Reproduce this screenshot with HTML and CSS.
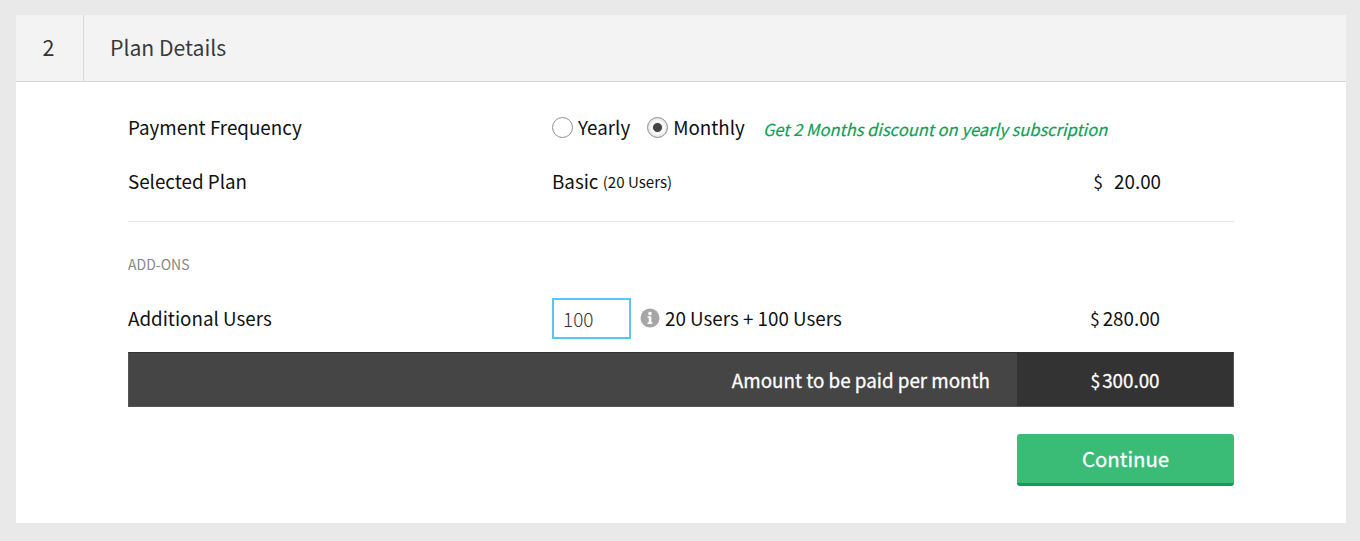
FILE: index.html
```
<!DOCTYPE html>
<html lang="en">
<head>
<meta charset="utf-8">
<title>Plan Details</title>
<link rel="stylesheet" href="styles.css">
</head>
<body>
<section class="panel">
  <header class="head">
    <div class="step">2</div>
    <h2 class="title">Plan Details</h2>
  </header>
  <div class="content">
    <div class="row row-freq">
      <div class="label">Payment Frequency</div>
      <div class="mid">
        <span class="radio"></span><span class="opt opt-y">Yearly</span>
        <span class="radio radio-on"></span><span class="opt">Monthly</span>
        <em class="promo">Get 2 Months discount on yearly subscription</em>
      </div>
    </div>
    <div class="row row-plan">
      <div class="label">Selected Plan</div>
      <div class="mid">Basic&nbsp;<small class="small">(20 Users)</small></div>
      <div class="amount"><span class="cur cur-wide">$</span>20.00</div>
    </div>
    <hr class="rule">
    <div class="section">ADD-ONS</div>
    <div class="row row-add">
      <div class="label lift">Additional Users</div>
      <div class="mid">
        <div class="field">100</div>
        <svg class="info" width="20" height="20" viewBox="0 0 20 20"><circle cx="10" cy="10" r="9.5" fill="#a6a6a6"/><circle cx="10" cy="5.6" r="1.8" fill="#fff"/><path d="M7.6 8.3h3.7v6h1.1v1.7H7.6v-1.7h1.2V10H7.6z" fill="#fff"/></svg>
        <span class="lift">20 Users + 100 Users</span>
      </div>
      <div class="amount amount-add"><span class="cur cur-add">$</span>280.00</div>
    </div>
    <div class="total">
      <div class="total-label">Amount to be paid per month</div>
      <div class="total-value"><span class="cur">$</span>300.00</div>
    </div>
    <div class="actions"><button class="btn" type="button">Continue</button></div>
  </div>
</section>
</body>
</html>
```
FILE: styles.css
```
* { box-sizing: border-box; }
html, body { margin: 0; height: 100%; }
body {
  background: #e9e9e9;
  padding: 15px 14px 18px 16px;
  font-family: "Noto Sans CJK JP", "Noto Sans", sans-serif;
  color: #111;
  font-size: 18.8px;
  line-height: 28px;
  overflow: hidden;
}
.panel { background: #fff; height: 508px; }
.head {
  display: flex;
  height: 67px;
  background: #f3f3f3;
  border-bottom: 1px solid #d4d4d4;
}
.step {
  width: 68px;
  border-right: 1px solid #d8d8d8;
  text-align: center;
  line-height: 64px;
  font-size: 21.5px;
  color: #333;
  padding-right: 2px;
}
.title {
  margin: 0;
  padding-left: 26px;
  font-weight: 400;
  font-size: 21.2px;
  line-height: 64px;
  color: #3a3a3a;
}
.content { padding: 18px 112px 0; }
.row { display: flex; align-items: center; }
.row-freq { height: 54px; }
.row-plan { height: 54px; }
.row-add { height: 41px; margin-top: 23px; }
.label { width: 424px; flex: none; }
.lift { padding-bottom: 2px; }
.mid { display: flex; align-items: center; flex: 1; white-space: pre; }
.radio {
  width: 21px;
  height: 21px;
  border-radius: 50%;
  border: 1px solid #8f8f8f;
  background: #fff;
  margin-right: 5px;
  flex: none;
}
.radio-on {
  background: radial-gradient(circle, #444 0 4px, #eee 5px, #fff 6px, #ddd 10px);
}
.opt-y { margin-right: 17px; }
.promo {
  margin: 4px 0 0 18px;
  font-size: 16.5px;
  color: #0d9f57;
  font-style: italic;
  -webkit-text-stroke: 0.2px #0d9f57;
}
.small { font-size: 15.1px; }
.amount { width: 200px; flex: none; text-align: right; padding-right: 73px; }
.amount-add { padding-right: 74px; }
.cur { font-size: 17.5px; margin-right: 2px; }
.cur-wide { margin-right: 11px; }
.cur-add { margin-right: 3px; }
.rule { margin: 13px 0 0; border: 0; height: 1px; background: #e4e4e4; }
.section {
  margin-top: 31px;
  height: 22px;
  font-size: 14px;
  line-height: 22px;
  color: #888;
}
.field {
  width: 79px;
  height: 41px;
  border: 2px solid #5cc4f5;
  padding-left: 9px;
  line-height: 37px;
  font-size: 19px;
  font-weight: 300;
  color: #333;
}
.info { margin: 0 5px 1px 9px; flex: none; }
.total {
  display: flex;
  height: 55px;
  margin-top: 13px;
  background: #454545;
  border: 1px solid #555;
  border-top-color: #333;
  color: #fff;
  -webkit-text-stroke: 0.3px #fff;
}
.total-label {
  flex: 1;
  text-align: right;
  padding-right: 27px;
  line-height: 53px;
}
.total-value {
  width: 216px;
  background: #333;
  text-align: center;
  line-height: 53px;
}
.actions { display: flex; justify-content: flex-end; margin-top: 27px; }
.btn {
  width: 217px;
  height: 52px;
  border: 0;
  border-bottom: 3px solid #0d9f57;
  border-radius: 3px;
  background: #3abb76;
  color: #fff;
  padding: 0;
  font: 400 20.4px/1 "Noto Sans CJK JP", "Noto Sans", sans-serif;
  -webkit-text-stroke: 0.3px #fff;
}
```
